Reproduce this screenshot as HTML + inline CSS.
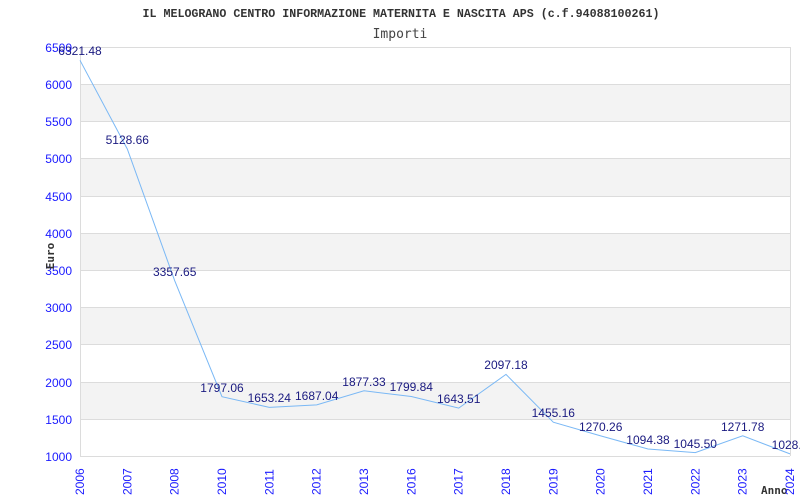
<!DOCTYPE html><html><head><style>body{margin:0;background:#fff}svg{display:block}</style></head><body>
<svg width="800" height="500" xmlns="http://www.w3.org/2000/svg" font-family="Liberation Sans, sans-serif">
<rect width="800" height="500" fill="#fff"/>
<g fill="#f3f3f3"><rect x="80" y="84" width="710" height="37"/><rect x="80" y="158" width="710" height="38"/><rect x="80" y="233" width="710" height="37"/><rect x="80" y="307" width="710" height="37"/><rect x="80" y="382" width="710" height="37"/></g>
<g stroke="#dcdcdc" stroke-width="1">
<line x1="80" y1="47.5" x2="790" y2="47.5"/><line x1="80" y1="84.5" x2="790" y2="84.5"/><line x1="80" y1="121.5" x2="790" y2="121.5"/><line x1="80" y1="158.5" x2="790" y2="158.5"/><line x1="80" y1="196.5" x2="790" y2="196.5"/><line x1="80" y1="233.5" x2="790" y2="233.5"/><line x1="80" y1="270.5" x2="790" y2="270.5"/><line x1="80" y1="307.5" x2="790" y2="307.5"/><line x1="80" y1="344.5" x2="790" y2="344.5"/><line x1="80" y1="382.5" x2="790" y2="382.5"/><line x1="80" y1="419.5" x2="790" y2="419.5"/><line x1="80" y1="456.5" x2="790" y2="456.5"/>
<line x1="80.5" y1="47" x2="80.5" y2="456"/><line x1="790.5" y1="47" x2="790.5" y2="456"/></g>
<text x="401" y="17" text-anchor="middle" font-family="Liberation Mono, monospace" font-size="11.65" font-weight="bold" fill="#333">IL MELOGRANO CENTRO INFORMAZIONE MATERNITA E NASCITA APS (c.f.94088100261)</text>
<text x="400" y="38" text-anchor="middle" font-family="DejaVu Sans Mono, monospace" font-size="13" fill="#444">Importi</text>
<g fill="#1a1aff" font-size="12" text-anchor="end">
<text x="72" y="52">6500</text><text x="72" y="89">6000</text><text x="72" y="126">5500</text><text x="72" y="163">5000</text><text x="72" y="201">4500</text><text x="72" y="238">4000</text><text x="72" y="275">3500</text><text x="72" y="312">3000</text><text x="72" y="349">2500</text><text x="72" y="387">2000</text><text x="72" y="424">1500</text><text x="72" y="461">1000</text></g>
<text transform="translate(54,256) rotate(-90)" text-anchor="middle" font-family="DejaVu Sans Mono, monospace" font-size="11" font-weight="bold" fill="#333">Euro</text>
<text x="761" y="494" font-family="DejaVu Sans Mono, monospace" font-size="11" font-weight="bold" fill="#333">Anno</text>
<polyline fill="none" stroke="#7ab8f5" stroke-width="1" points="80,60.3 127.3,149 174.7,280.7 222,396.7 269.3,407.4 316.7,404.9 364,390.8 411.3,396.5 458.7,408.1 506,374.4 553.3,422.2 600.7,435.9 648,449 695.3,452.6 742.7,435.8 790,453.9"/>
<g fill="#1a1a80" font-size="12" text-anchor="middle">
<text x="80" y="55">6321.48</text><text x="127.3" y="144">5128.66</text><text x="174.7" y="276">3357.65</text><text x="222" y="392">1797.06</text><text x="269.3" y="402">1653.24</text><text x="316.7" y="400">1687.04</text><text x="364" y="386">1877.33</text><text x="411.3" y="391">1799.84</text><text x="458.7" y="403">1643.51</text><text x="506" y="369">2097.18</text><text x="553.3" y="417">1455.16</text><text x="600.7" y="431">1270.26</text><text x="648" y="444">1094.38</text><text x="695.3" y="448">1045.50</text><text x="742.7" y="431">1271.78</text><text x="790" y="449">1028.6</text></g>
<g fill="#1a1aff" font-size="12">
<text transform="translate(84,495) rotate(-90)">2006</text><text transform="translate(131.3,495) rotate(-90)">2007</text><text transform="translate(178.7,495) rotate(-90)">2008</text><text transform="translate(226,495) rotate(-90)">2010</text><text transform="translate(273.3,495) rotate(-90)">2011</text><text transform="translate(320.7,495) rotate(-90)">2012</text><text transform="translate(368,495) rotate(-90)">2013</text><text transform="translate(415.3,495) rotate(-90)">2016</text><text transform="translate(462.7,495) rotate(-90)">2017</text><text transform="translate(510,495) rotate(-90)">2018</text><text transform="translate(557.3,495) rotate(-90)">2019</text><text transform="translate(604.7,495) rotate(-90)">2020</text><text transform="translate(652,495) rotate(-90)">2021</text><text transform="translate(699.3,495) rotate(-90)">2022</text><text transform="translate(746.7,495) rotate(-90)">2023</text><text transform="translate(794,495) rotate(-90)">2024</text></g>
</svg></body></html>
